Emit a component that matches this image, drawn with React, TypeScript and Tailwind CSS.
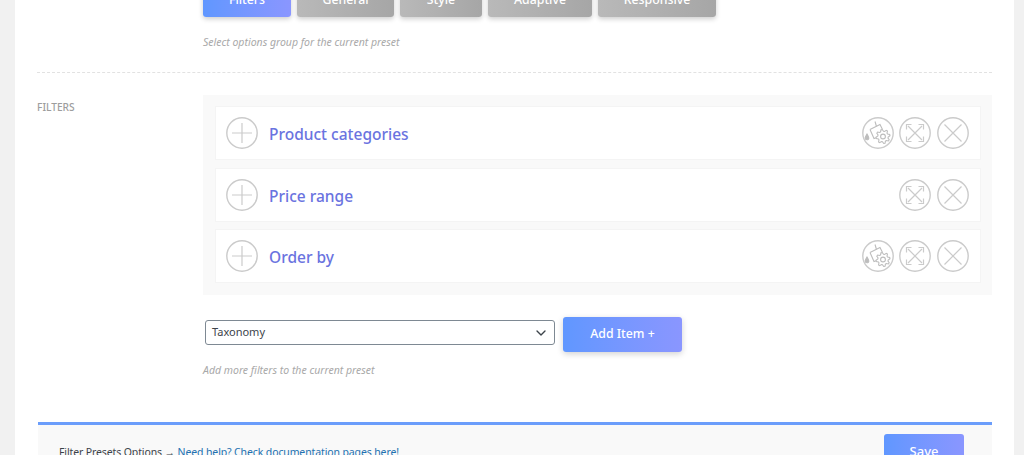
import { ChevronDown } from "lucide-react"

function CircleIcon({ children }: { children: React.ReactNode }) {
  return (
    <svg width="32" height="32" viewBox="0 0 32 32" fill="none" stroke="#cbcbcb" strokeWidth="1.2" className="shrink-0">
      <circle cx="16" cy="16" r="15.2" strokeWidth="1.4" />
      {children}
    </svg>
  )
}

function PlusIcon() {
  return (
    <CircleIcon>
      <path d="M16 6v20M6 16h20" />
    </CircleIcon>
  )
}

function CloseIcon() {
  return (
    <CircleIcon>
      <path d="M7.500 7.500l17 17M24.500 7.500l-17 17" />
    </CircleIcon>
  )
}

function ExpandIcon() {
  return (
    <CircleIcon>
      <path d="M9 9l14 14M23 9L9 23" />
      <path d="M7.500 12.500V7.500h5M19.500 7.500h5v5M24.500 19.500v5h-5M12.500 24.500h-5v-5" />
    </CircleIcon>
  )
}

// 8 teeth, drawn as a closed polygon
const gearPoints = Array.from({ length: 32 }, (_, i) => {
  const angle = ((i - 0.5) * Math.PI) / 16
  const radius = (i + 1) % 4 < 2 ? 7 : 5.200
  return `${(21 + radius * Math.cos(angle)).toFixed(2)},${(19.500 + radius * Math.sin(angle)).toFixed(2)}`
}).join(" ")

function StyleIcon() {
  return (
    <CircleIcon>
      <g stroke="#bdbdbd" strokeWidth="1.100">
        <path d="M13 4.500l1.500 5" />
        <path d="M8 12.500l10-5 2.500 5M8 12.500l4 9 3-1" />
        <path d="M5 17c-1.200 2-1.800 3-1.800 4a1.800 1.800 0 0 0 3.600 0c0-1-.6-2-1.800-4z" fill="#bdbdbd" />
        <polygon points={gearPoints} fill="#fff" />
        <circle cx="21" cy="19.500" r="2.400" />
      </g>
    </CircleIcon>
  )
}

function FilterRow({ title, gap, style = true }: { title: string; gap: string; style?: boolean }) {
  return (
    <div className={`flex h-[54px] items-center border border-[#f4f4f4] bg-white pl-[10px] pr-[11px] ${gap}`}>
      <PlusIcon />
      <span className="ml-[11px] pt-[3px] text-[15.5px] font-medium text-[#6a73e0]">{title}</span>
      <div className="ml-auto flex gap-[6px]">
        {style && (
          <div className="-mr-px">
            <StyleIcon />
          </div>
        )}
        <ExpandIcon />
        <CloseIcon />
      </div>
    </div>
  )
}

function Tab({ label, width, active = false }: { label: string; width: string; active?: boolean }) {
  return (
    <div
      className={`flex h-[33px] items-center justify-center rounded-[3px] text-[12.3px] font-medium text-white shadow-[0_2px_5px_rgba(0,0,0,0.2)] ${width} ${
        active ? "bg-gradient-to-r from-[#6097ff] to-[#8a96ff]" : "bg-gradient-to-r from-[#b9b9b9] to-[#a6a6a6]"
      }`}
    >
      {label}
    </div>
  )
}

export default function App() {
  return (
    <div className="h-[455px] overflow-hidden bg-[#f1f1f1] pl-[15px] pr-[10px] font-['Noto_Sans',sans-serif]">
      <div className="h-full overflow-hidden bg-white px-[22px]">
        <div className="-mt-[16px] ml-[166px] flex gap-[6px]">
          <Tab label="Filters" width="w-[88px]" active />
          <Tab label="General" width="w-[97px]" />
          <Tab label="Style" width="w-[82px]" />
          <Tab label="Adaptive" width="w-[104px]" />
          <Tab label="Responsive" width="w-[118px]" />
        </div>
        <p className="ml-[166px] mt-[17px] text-[10.5px] italic leading-[16px] text-[#a9a9a9]">Select options group for the current preset</p>
        <div className="mt-[22px] border-t border-dashed border-[#e2e2e2]" />

        <div className="mt-[22px] flex">
          <div className="w-[166px] pt-[4px] text-[10.2px] font-medium leading-[16px] text-[#9d9d9d]">FILTERS</div>
          <div className="flex-1">
            <div className="flex h-[200px] flex-col bg-[#f9f9f9] pl-[12px] pr-[11px] pt-[11px]">
              <FilterRow title="Product categories" gap="mb-[8px]" />
              <FilterRow title="Price range" gap="mb-[7px]" style={false} />
              <FilterRow title="Order by" gap="" />
            </div>
            <div className="mt-[22px] flex items-start">
              <div className="ml-[2px] mt-[3px] flex h-[25px] w-[350px] items-center justify-between rounded-[3px] border border-[#7e8993] bg-white pl-[6px] pr-[5px] text-[11px] text-[#3c434a]">
                <span>Taxonomy</span>
                <ChevronDown size={16} strokeWidth={2} className="text-[#3c434a]" />
              </div>
              <div className="ml-[8px] flex h-[35px] w-[119px] items-center justify-center rounded-[3px] bg-gradient-to-r from-[#6097ff] to-[#8a96ff] text-[12.3px] font-medium text-white shadow-[0_2px_6px_rgba(0,0,0,0.18)]">
                Add Item +
              </div>
            </div>
            <p className="mt-[10px] text-[10.5px] italic leading-[16px] text-[#a9a9a9]">Add more filters to the current preset</p>
          </div>
        </div>

        <div className="ml-px mt-[44px] border-t-[3px] border-[#6b9dfb] bg-[#f9f9f9] pl-[21px] pr-[28px] pt-[9px]">
          <div className="flex items-start justify-between">
            <p className="pt-[10px] text-[10.5px] tracking-[-0.12px] leading-[16px] text-[#3c434a]">
              Filter Presets Options → <span className="text-[#2271b1]">Need help? Check documentation pages here!</span>
            </p>
            <div className="flex h-[35px] w-[80px] items-center justify-center rounded-[3px] bg-gradient-to-r from-[#6097ff] to-[#8a96ff] text-[13px] font-medium text-white">
              Save
            </div>
          </div>
        </div>
      </div>
    </div>
  )
}
